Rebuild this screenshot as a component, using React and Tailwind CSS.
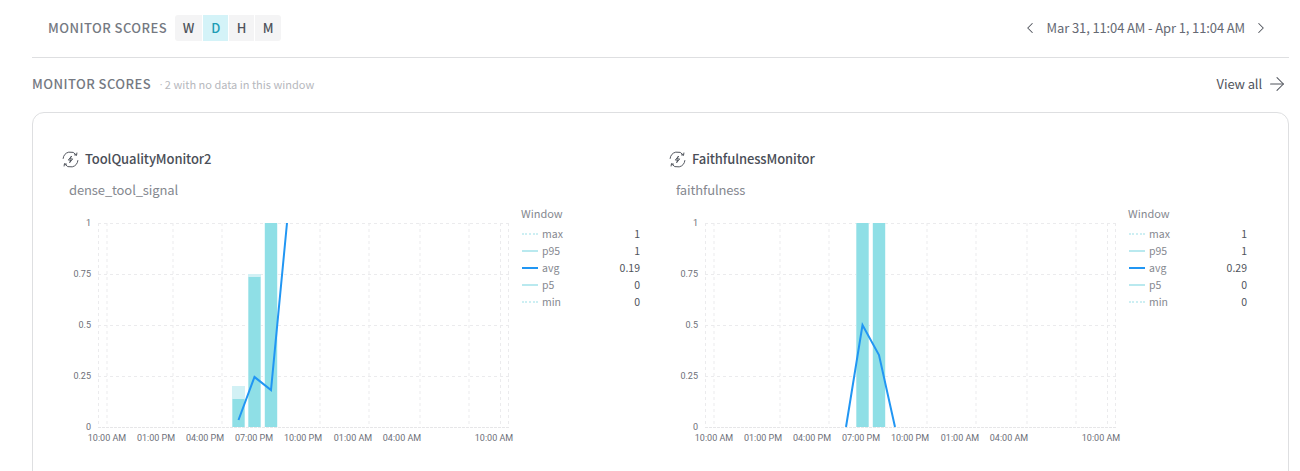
import React from "react";
import { ChevronLeft, ChevronRight, ArrowRight } from "lucide-react";

const FONT = "font-['Noto_Sans_CJK_SC','Source_Sans_Pro',sans-serif]";

function MonitorIcon() {
  return (
    <svg width="17" height="17" viewBox="0 0 24 24" fill="none" stroke="#50545c" strokeWidth="1.4" strokeLinecap="round" strokeLinejoin="round" className="shrink-0">
      <path d="M1.6 10.5A10.5 10.5 0 0 1 20.6 5.8" />
      <path d="M22.4 13.5A10.5 10.5 0 0 1 3.4 18.2" />
      <path d="M21 2.8 20.6 5.8 17.6 5.5" />
      <path d="M3 21.2 3.4 18.2 6.4 18.5" />
      <path d="M13.2 7.5 9 12.8h3.2l-1.4 3.7 4.2-5.3h-3.2z" />
    </svg>
  );
}

const X_LABELS = [
  ["10:00 AM", 45],
  ["01:00 PM", 94],
  ["04:00 PM", 143],
  ["07:00 PM", 192],
  ["10:00 PM", 241],
  ["01:00 AM", 291],
  ["04:00 AM", 340],
  ["10:00 AM", 432],
];
const Y_LABELS = [["1", 7], ["0.75", 58], ["0.5", 109], ["0.25", 160], ["0", 211]];
const V_GRID = [36.5, 45, 111, 160, 209, 258, 307, 358, 407, 438.5, 446.5];

function Chart({ bars, line }) {
  return (
    <svg width="455" height="240" viewBox="0 -10 455 240" className="block shrink-0">
      {V_GRID.map((x) => (
        <line key={x} x1={x} x2={x} y1="7" y2="211" stroke="#ebebed" strokeWidth="1" strokeDasharray="3 3" />
      ))}
      {[7, 58, 109, 160].map((y) => (
        <line key={y} x1="36" x2="447" y1={y + 0.5} y2={y + 0.5} stroke="#ebebed" strokeWidth="1" strokeDasharray="3 3" />
      ))}
      <line x1="36" x2="447" y1="211.5" y2="211.5" stroke="#e6e6e8" strokeWidth="1" strokeDasharray="3 1" />
      {bars.map((b) => (
        <g key={b.x}>
          <rect x={b.x} y={b.light} width="13" height={211 - b.light} fill="#d2f1f5" />
          <rect x={b.x + 0.5} y={b.dark} width="12" height={211 - b.dark} fill="#8fdfe6" />
        </g>
      ))}
      <polyline points={line} fill="none" stroke="#2196f3" strokeWidth="2" strokeLinejoin="miter" />
      {Y_LABELS.map(([t, y]) => (
        <text key={t} x="29" y={y + 3} textAnchor="end" fontSize="9" fill="#6d7079" fontFamily="Roboto, sans-serif">{t}</text>
      ))}
      {X_LABELS.map(([t, x], i) => (
        <text key={i} x={x} y="225" textAnchor="middle" fontSize="9" fill="#6d7079" fontFamily="Roboto, sans-serif">{t}</text>
      ))}
    </svg>
  );
}

function Swatch({ kind }) {
  if (kind === "avg") return <span className="block w-[16px] border-t-2 border-[#2196f3]" />;
  if (kind === "solid") return <span className="block w-[16px] border-t-2 border-[#b9e9ef]" />;
  return <span className="block w-[16px] border-t-2 border-dotted border-[#cdeff3]" />;
}

function Legend({ values }) {
  const rows = [
    ["max", "dash"],
    ["p95", "solid"],
    ["avg", "avg"],
    ["p5", "solid"],
    ["min", "dash"],
  ];
  return (
    <div className="ml-[4px] -mt-[1px] w-[119px] shrink-0">
      <div className="text-[11px] leading-[16px] text-[#85888f] mb-[4px]">Window</div>
      <div className="flex flex-col">
        {rows.map(([label, kind], i) => (
          <div key={label} className="flex items-center h-[17px] text-[10.5px] pl-[1px]">
            <Swatch kind={kind} />
            <span className="ml-[4px] text-[#85888f]">{label}</span>
            <span className="ml-auto text-[#50545c]">{values[i]}</span>
          </div>
        ))}
      </div>
    </div>
  );
}

function Panel({ title, metric, bars, line, values }) {
  return (
    <div className="w-[607px] shrink-0">
      <div className="flex items-center gap-[6px] h-[18px]">
        <MonitorIcon />
        <span className="text-[13px] tracking-[-0.1px] font-medium text-[#4a4e57] leading-[18px]">{title}</span>
      </div>
      <div className="ml-[7px] mt-[13px] text-[13px] tracking-[-0.12px] leading-[18px] text-[#85888f]">{metric}</div>
      <div className="flex mt-[7px]">
        <Chart bars={bars} line={line} />
        <Legend values={values} />
      </div>
    </div>
  );
}

export default function App() {
  return (
    <div className={`${FONT} w-[1300px] h-[471px] overflow-hidden bg-white pl-[32px] pr-[11px]`}>
      <div className="h-[58px] border-b border-[#dedfe1] flex items-center pb-[2px] pl-[16px] pr-[19px]">
        <span className="text-[13px] font-medium tracking-[0.45px] text-[#757982] uppercase">Monitor Scores</span>
        <div className="flex gap-[1px] ml-[8px]">
          <span className="w-[27px] h-[26px] flex items-center justify-center bg-[#f4f4f5] rounded-l-[3px] text-[13px] font-medium text-[#50545c]">W</span>
          <span className="w-[25px] h-[26px] flex items-center justify-center bg-[#d4f3f8] text-[13px] font-medium text-[#1f9db5]">D</span>
          <span className="w-[25px] h-[26px] flex items-center justify-center bg-[#f4f4f5] text-[13px] font-medium text-[#50545c]">H</span>
          <span className="w-[26px] h-[26px] flex items-center justify-center bg-[#f4f4f5] rounded-r-[3px] text-[13px] font-medium text-[#50545c]">M</span>
        </div>
        <div className="ml-auto flex items-center">
          <ChevronLeft size={18} strokeWidth={1.4} color="#50545c" />
          <span className="ml-[8px] mr-[7px] text-[13px] tracking-[-0.12px] text-[#656973]">Mar 31, 11:04 AM - Apr 1, 11:04 AM</span>
          <ChevronRight size={18} strokeWidth={1.4} color="#50545c" />
        </div>
      </div>

      <div className="h-[54px] flex items-center pb-[2px]">
        <span className="text-[13px] font-medium tracking-[0.45px] text-[#757982] uppercase">Monitor Scores</span>
        <span className="ml-[8px] mr-[2px] text-[11px] text-[#b6b8bd] font-['Liberation_Sans',sans-serif]">·</span>
        <span className="text-[11px] text-[#b6b8bd]">2 with no data in this window</span>
        <div className="ml-auto flex items-center gap-[4px] pr-[1px]">
          <span className="text-[13px] tracking-[-0.12px] text-[#50545c]">View all</span>
          <ArrowRight size={22} strokeWidth={1.1} color="#50545c" />
        </div>
      </div>

      <div className="border border-[#dedfe1] rounded-[12px] pl-[29px] pt-[37px] pb-[40px] flex">
        <Panel
          title="ToolQualityMonitor2"
          metric="dense_tool_signal"
          values={["1", "1", "0.19", "0", "0"]}
          bars={[
            { x: 170, light: 170, dark: 183 },
            { x: 186, light: 58, dark: 61 },
            { x: 202.5, light: 7, dark: 7 },
          ]}
          line="176.5,204 192.5,161 209,174 225,7"
        />
        <Panel
          title="FaithfulnessMonitor"
          metric="faithfulness"
          values={["1", "1", "0.29", "0", "0"]}
          bars={[
            { x: 187, light: 7, dark: 7 },
            { x: 203.5, light: 7, dark: 7 },
          ]}
          line="177,211 193.5,109 210,139 226,211"
        />
      </div>
    </div>
  );
}
